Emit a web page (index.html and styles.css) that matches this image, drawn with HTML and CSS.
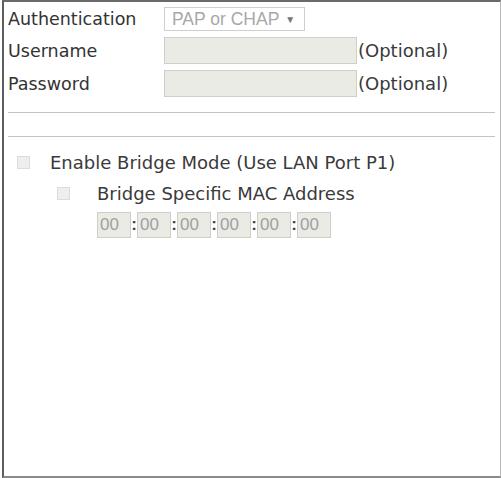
FILE: index.html
```html
<!DOCTYPE html>
<html>
<head>
<meta charset="utf-8">
<link rel="stylesheet" href="styles.css">
</head>
<body>
<div class="frame">
  <div class="form">
    <div class="row row-auth">
      <span class="label">Authentication</span>
      <span class="select">PAP or CHAP <span class="caret">&#9660;</span></span>
    </div>
    <div class="row">
      <span class="label">Username</span>
      <span class="input"></span>
      <span class="note">(Optional)</span>
    </div>
    <div class="row">
      <span class="label">Password</span>
      <span class="input"></span>
      <span class="note">(Optional)</span>
    </div>
  </div>
  <div class="rules">
    <div class="rule"></div>
    <div class="rule"></div>
  </div>
  <div class="bridge">
    <div class="check-row">
      <span class="box"></span>
      <span class="ctext">Enable Bridge Mode (Use LAN Port P1)</span>
    </div>
    <div class="check-row sub">
      <span class="box"></span>
      <span class="ctext">Bridge Specific MAC Address</span>
    </div>
    <div class="mac">
      <span class="oct">00</span><span class="colon">:</span>
      <span class="oct">00</span><span class="colon">:</span>
      <span class="oct">00</span><span class="colon">:</span>
      <span class="oct">00</span><span class="colon">:</span>
      <span class="oct">00</span><span class="colon">:</span>
      <span class="oct">00</span>
    </div>
  </div>
</div>
</body>
</html>
```
FILE: styles.css
```css
html, body {
  margin: 0;
  padding: 0;
  background: #fff;
}
body {
  width: 501px;
  height: 478px;
  overflow: hidden;
}
.frame {
  box-sizing: border-box;
  width: 499px;
  height: 478px;
  margin-left: 2px;
  border-top: 2px solid #6a6a6a;
  border-left: 2px solid #5e5e5e;
  border-right: 1px solid #b8b8b8;
  border-bottom: 2px solid #8a8a8a;
  font-family: "DejaVu Sans", Verdana, sans-serif;
  color: #333;
  font-size: 17.5px;
}
.form {
  padding: 5px 0 0 4px;
  display: flex;
  flex-direction: column;
  gap: 6px;
}
.row {
  display: flex;
  align-items: center;
  height: 27px;
}
.row-auth {
  height: 24px;
}
.label {
  width: 156px;
  flex: none;
}
.select {
  box-sizing: border-box;
  width: 141px;
  height: 24px;
  border: 1px solid #cfcfcf;
  font-family: "Liberation Sans", Arial, sans-serif;
  font-size: 17.5px;
  color: #a8a8a8;
  padding: 0 0 0 7px;
  display: flex;
  align-items: center;
  gap: 6px;
}
.caret {
  font-size: 10px;
  color: #777;
}
.input {
  box-sizing: border-box;
  width: 193px;
  height: 27px;
  background: #ebebe6;
  border: 1px solid #cfcfc9;
  flex: none;
}
.note {
  padding-left: 1px;
  font-size: 18px;
  color: #3a3a3a;
}
.rules {
  padding: 15px 5px 0 4px;
  display: flex;
  flex-direction: column;
  gap: 23px;
}
.rule {
  height: 1px;
  background: #c4c4c4;
}
.bridge {
  padding: 15px 0 0 13px;
}
.check-row {
  display: flex;
  align-items: center;
  height: 20px;
  gap: 20px;
}
.check-row.sub {
  margin-top: 11px;
  padding-left: 40px;
  gap: 27px;
}
.box {
  box-sizing: border-box;
  width: 13px;
  height: 13px;
  border: 1px solid #dcdcdc;
  background: #eeeeee;
  flex: none;
}
.ctext {
  font-size: 18px;
  color: #3a3a3a;
}
.mac {
  display: flex;
  align-items: center;
  margin-top: 9px;
  padding-left: 80px;
  font-family: "Liberation Sans", Arial, sans-serif;
  font-size: 17px;
}
.oct {
  box-sizing: border-box;
  width: 34px;
  height: 26px;
  background: #ebebe6;
  border: 1px solid #cfcfc9;
  color: #a0a0a0;
  padding-left: 2px;
  display: flex;
  align-items: center;
}
.colon {
  width: 6px;
  text-align: center;
  color: #444;
  font-weight: bold;
}
```
